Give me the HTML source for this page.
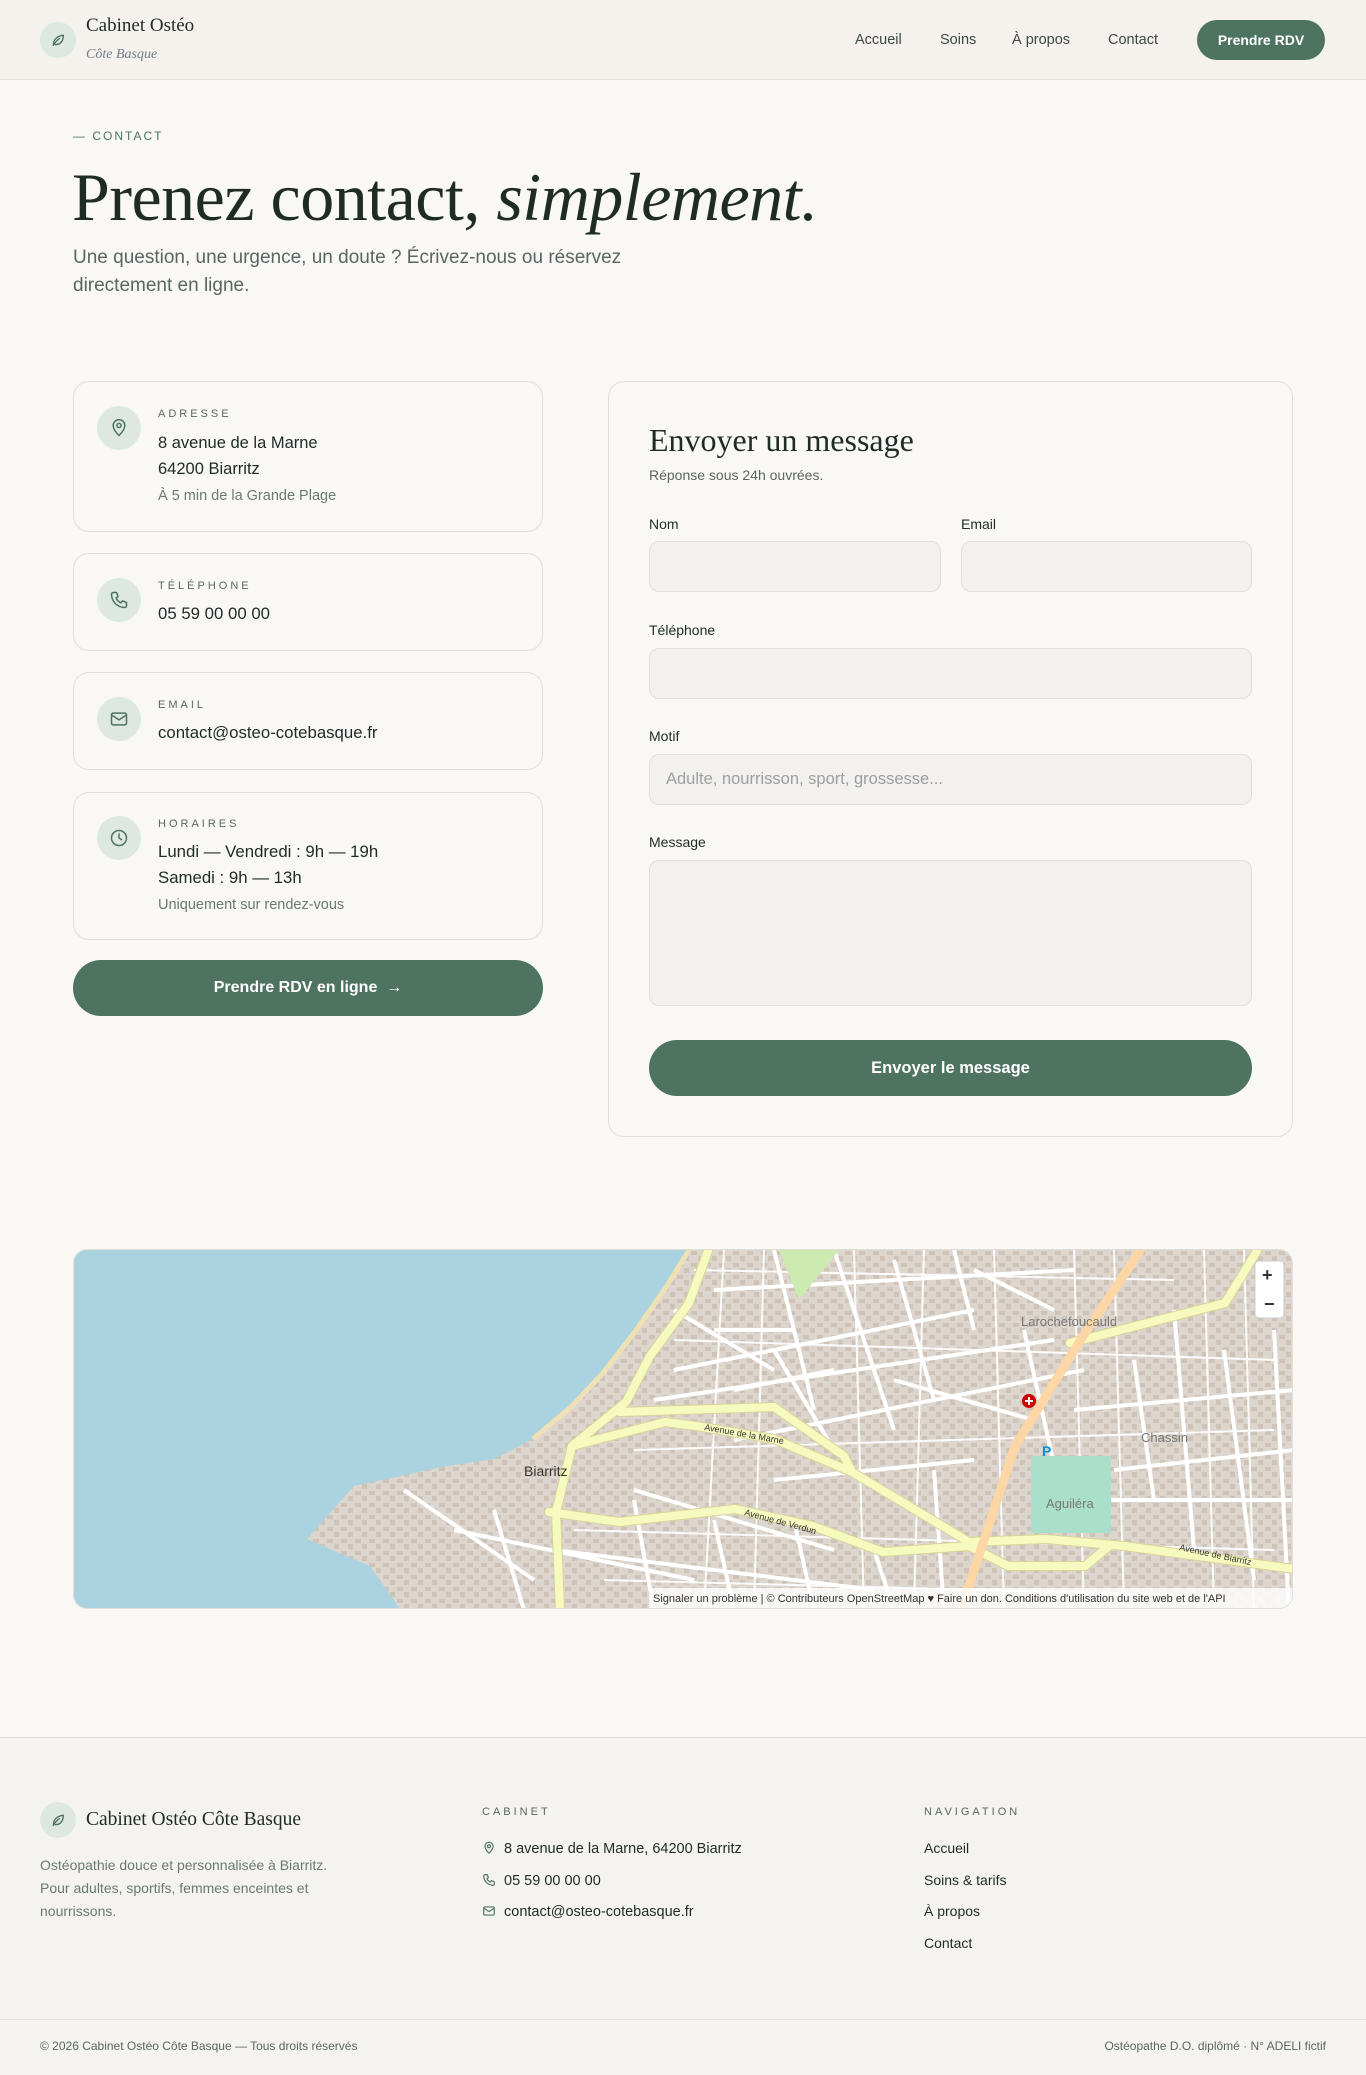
<!DOCTYPE html>
<html lang="fr"><head><meta charset="utf-8"><title>Contact</title>
<style>
*{box-sizing:border-box;margin:0;padding:0}
body{width:1366px;height:2075px;background:#f9f8f5;font-family:"Liberation Sans",sans-serif;color:#1f2b25;position:relative;overflow:hidden}
.a{position:absolute;white-space:nowrap}
.serif{font-family:"Liberation Serif",serif}
.lc{line-height:1}
.circle{position:absolute;border-radius:50%;background:#dce8e0;display:flex;align-items:center;justify-content:center}
.card{position:absolute;left:73px;width:470px;border:1px solid #e3dfd8;border-radius:16px;background:#f9f8f5}
.lab{font-size:11px;letter-spacing:3px;color:#5a6660}
.inp{position:absolute;background:#f3f1ed;border:1px solid #e3dfd8;border-radius:10px}
.flab{font-size:14px;font-weight:500;color:#1f2b25}
.btn{position:absolute;background:#4e7360;color:#fff;font-weight:bold;display:flex;align-items:center;justify-content:center}
</style></head><body>
<!-- header -->
<div class="a" style="left:0;top:0;width:1366px;height:80px;background:#f5f1ec;border-bottom:1px solid #e5e0d8"></div>
<div class="circle" style="left:40px;top:22px;width:36px;height:36px"><svg width="16" height="16" viewBox="0 0 24 24" fill="none" stroke="#4e7360" stroke-width="2" stroke-linecap="round"><path d="M5 20c0-8 5-14 15-15 0 9-5 14-12 14"/><path d="M5 20c3-5 6-8 9-10"/></svg></div>
<div class="a serif lc" style="left:86px;top:16px;font-size:19px;color:#1f2b25">Cabinet Ostéo</div>
<div class="a serif lc" style="left:86px;top:48px;font-size:14px;font-style:italic;color:#6f7d88">Côte Basque</div>
<div class="a lc" style="left:855px;top:33px;font-size:14.5px;color:#3d4a43">Accueil</div>
<div class="a lc" style="left:940px;top:33px;font-size:14.5px;color:#3d4a43">Soins</div>
<div class="a lc" style="left:1012px;top:33px;font-size:14.5px;color:#3d4a43">À propos</div>
<div class="a lc" style="left:1108px;top:33px;font-size:14.5px;color:#3d4a43">Contact</div>
<div class="btn" style="left:1197px;top:20px;width:128px;height:40px;border-radius:20px;font-size:14px">Prendre RDV</div>

<!-- hero -->
<div class="a lc" style="left:73px;top:130px;font-size:12px;letter-spacing:2px;color:#4e7360">— CONTACT</div>
<div class="a serif lc" style="left:72px;top:163px;font-size:68px;letter-spacing:-0.5px;color:#1f2b25">Prenez contact, <i>simplement.</i></div>
<div class="a" style="left:73px;top:244px;font-size:19px;line-height:28px;color:#5a6660;white-space:normal;width:640px">Une question, une urgence, un doute ? Écrivez-nous ou réservez<br>directement en ligne.</div>

<!-- cards -->
<div class="card" style="top:381px;height:151px"></div>
<div class="circle" style="left:97px;top:406px;width:44px;height:44px"><svg width="20" height="20" viewBox="0 0 24 24" fill="none" stroke="#4e7360" stroke-width="1.8"><path d="M12 21s-7-6.5-7-12a7 7 0 0 1 14 0c0 5.5-7 12-7 12z"/><circle cx="12" cy="9" r="2.5"/></svg></div>
<div class="a lab lc" style="left:158px;top:409px">ADRESSE</div>
<div class="a" style="left:158px;top:430px;font-size:16.5px;line-height:26px">8 avenue de la Marne<br>64200 Biarritz</div>
<div class="a lc" style="left:158px;top:489px;font-size:14.5px;color:#6b7a70">À 5 min de la Grande Plage</div>

<div class="card" style="top:553px;height:98px"></div>
<div class="circle" style="left:97px;top:578px;width:44px;height:44px"><svg width="20" height="20" viewBox="0 0 24 24" fill="none" stroke="#4e7360" stroke-width="1.8" stroke-linejoin="round"><path d="M5 3h4l2 5-2.5 1.5a11 11 0 0 0 6 6L16 13l5 2v4a2 2 0 0 1-2 2A16 16 0 0 1 3 5a2 2 0 0 1 2-2z"/></svg></div>
<div class="a lab lc" style="left:158px;top:581px">TÉLÉPHONE</div>
<div class="a lc" style="left:158px;top:606px;font-size:16.8px">05 59 00 00 00</div>

<div class="card" style="top:672px;height:98px"></div>
<div class="circle" style="left:97px;top:697px;width:44px;height:44px"><svg width="20" height="20" viewBox="0 0 24 24" fill="none" stroke="#4e7360" stroke-width="1.8"><rect x="3" y="5" width="18" height="14" rx="2"/><path d="M3 7l9 6 9-6"/></svg></div>
<div class="a lab lc" style="left:158px;top:700px">EMAIL</div>
<div class="a lc" style="left:158px;top:725px;font-size:16.8px">contact@osteo-cotebasque.fr</div>

<div class="card" style="top:792px;height:148px"></div>
<div class="circle" style="left:97px;top:816px;width:44px;height:44px"><svg width="20" height="20" viewBox="0 0 24 24" fill="none" stroke="#4e7360" stroke-width="1.8" stroke-linecap="round"><circle cx="12" cy="12" r="9"/><path d="M12 7v5l3 2"/></svg></div>
<div class="a lab lc" style="left:158px;top:819px">HORAIRES</div>
<div class="a" style="left:158px;top:839px;font-size:16.8px;line-height:26px">Lundi — Vendredi : 9h — 19h<br>Samedi : 9h — 13h</div>
<div class="a lc" style="left:158px;top:898px;font-size:14.5px;color:#6b7a70">Uniquement sur rendez-vous</div>

<div class="btn" style="left:73px;top:960px;width:470px;height:56px;border-radius:28px;font-size:16px">Prendre RDV en ligne&nbsp;&nbsp;<span style="font-weight:normal">→</span></div>

<!-- form -->
<div class="a" style="left:608px;top:381px;width:685px;height:756px;border:1px solid #e3dfd8;border-radius:16px"></div>
<div class="a serif lc" style="left:649px;top:424px;font-size:32px">Envoyer un message</div>
<div class="a lc" style="left:649px;top:468px;font-size:14px;color:#5a6660">Réponse sous 24h ouvrées.</div>
<div class="a flab lc" style="left:649px;top:517px">Nom</div>
<div class="a flab lc" style="left:961px;top:517px">Email</div>
<div class="inp" style="left:649px;top:541px;width:292px;height:51px"></div>
<div class="inp" style="left:961px;top:541px;width:291px;height:51px"></div>
<div class="a flab lc" style="left:649px;top:623px">Téléphone</div>
<div class="inp" style="left:649px;top:648px;width:603px;height:51px"></div>
<div class="a flab lc" style="left:649px;top:729px">Motif</div>
<div class="inp" style="left:649px;top:754px;width:603px;height:51px"></div>
<div class="a lc" style="left:666px;top:771px;font-size:16.5px;color:#9a9ea3">Adulte, nourrisson, sport, grossesse...</div>
<div class="a flab lc" style="left:649px;top:835px">Message</div>
<div class="inp" style="left:649px;top:860px;width:603px;height:146px"></div>
<div class="btn" style="left:649px;top:1040px;width:603px;height:56px;border-radius:28px;font-size:16.5px">Envoyer le message</div>

<!-- map -->
<div class="a" style="left:73px;top:1249px;width:1220px;height:360px;border-radius:14px;overflow:hidden;border:1px solid #e3dfd8">
<svg width="1220" height="360" viewBox="0 0 1220 360">
<defs><pattern id="b" width="14" height="12" patternUnits="userSpaceOnUse"><rect width="14" height="12" fill="#ddd6cf"/><rect x="1" y="1" width="6" height="4" fill="#cfc2b6"/><rect x="8" y="6" width="5" height="5" fill="#cfc2b6"/></pattern></defs>
<rect width="1220" height="360" fill="url(#b)"/>
<g stroke="#fff" stroke-width="4" fill="none">
<path d="M640 40L1000 20M600 120L900 60M580 150L980 90M660 190L1010 120M700 230L900 210M560 240L760 300M480 300L800 340M380 280L620 330M600 60L700 120M700 0L740 160M760 0L820 180M820 10L860 150M880 0L900 80M950 80L990 260M1060 110L1080 250M1100 60L1120 300M1150 100L1180 330M1200 80L1215 360M560 250L580 360M640 270L660 360M720 270L740 360M800 300L820 360M860 220L870 360M420 260L450 360M330 240L460 330M700 100L760 200M1000 160L1220 140M1040 220L1220 200M1000 250L1220 250M820 130L960 170M900 20L980 60M640 80L720 80M660 140L760 120"/>
</g>
<g stroke="#fff" stroke-width="2" fill="none" opacity=".9">
<path d="M620 20L1100 30M600 90L1200 110M560 200L1200 180M500 280L1200 300M530 330L1100 345M650 0L630 360M690 0L680 360M780 0L790 360M850 0L840 360M920 0L930 360M1000 0L1010 360M1040 0L1050 360M1130 0L1140 360M1170 0L1180 360"/>
</g>
<path d="M0 0H615L591 39 560 83 529 123 498 156 459 189 420 209 373 216 327 226 280 236 257 262 233 289 296 316 327 360H0Z" fill="#aad3df"/>
<path d="M615 0L591 39 560 83 529 123 498 156 459 189" stroke="#efe0b6" stroke-width="5" fill="none"/>
<path d="M705 0h60l-40 50z" fill="#cdebb0"/>
<path d="M957 206h80v77h-80z" fill="#aae0cb"/>
<g fill="none" stroke-linecap="round" stroke-linejoin="round">
<g stroke="#d8d49a" stroke-width="10"><path d="M634 1L615 53 576 106 552 152 498 196 482 262 486 360M545 162L700 157 770 206 778 222M498 196L591 172 622 176 700 189 778 222 895 292 972 289 1050 296 1220 319M475 262L545 272 661 259 739 276 809 302 895 296M895 296L934 316 1011 316 1035 296M996 93L1151 53 1183 1"/></g>
<g stroke="#f7fabf" stroke-width="8"><path d="M634 1L615 53 576 106 552 152 498 196 482 262 486 360M545 162L700 157 770 206 778 222M498 196L591 172 622 176 700 189 778 222 895 292 972 289 1050 296 1220 319M475 262L545 272 661 259 739 276 809 302 895 296M895 296L934 316 1011 316 1035 296M996 93L1151 53 1183 1"/></g>
<path d="M1066 1L1011 83 941 196 887 360" stroke="#fcd6a4" stroke-width="9"/>
</g>
<text x="450" y="226" font-family="Liberation Sans" font-size="14" fill="#333">Biarritz</text>
<text x="947" y="76" font-family="Liberation Sans" font-size="13" fill="#777">Larochefoucauld</text>
<text x="1067" y="192" font-family="Liberation Sans" font-size="13" fill="#777">Chassin</text>
<text x="972" y="258" font-family="Liberation Sans" font-size="13" fill="#777">Aguiléra</text>
<text x="630" y="180" font-family="Liberation Sans" font-size="9" fill="#333" transform="rotate(10 630 180)">Avenue de la Marne</text>
<text x="670" y="265" font-family="Liberation Sans" font-size="9" fill="#333" transform="rotate(15 670 265)">Avenue de Verdun</text>
<text x="1105" y="300" font-family="Liberation Sans" font-size="9" fill="#333" transform="rotate(12 1105 300)">Avenue de Biarritz</text>
<circle cx="955" cy="151" r="7" fill="#c00"/><path d="M955 147v8M951 151h8" stroke="#fff" stroke-width="2"/>
<text x="968" y="206" font-family="Liberation Sans" font-size="14" font-weight="bold" fill="#0092da">P</text>
<rect x="1181" y="11" width="29" height="57" rx="4" fill="#fff" stroke="#ccc"/>
<text x="1188" y="31" font-family="Liberation Sans" font-size="18" font-weight="bold" fill="#333">+</text>
<text x="1190" y="60" font-family="Liberation Sans" font-size="18" font-weight="bold" fill="#333">−</text>
<rect x="575" y="338" width="645" height="22" fill="#fff" opacity=".8"/>
<text x="579" y="352" font-family="Liberation Sans" font-size="11" fill="#333">Signaler un problème | © Contributeurs OpenStreetMap ♥ Faire un don. Conditions d'utilisation du site web et de l'API</text>
</svg></div>

<!-- footer -->
<div class="a" style="left:0;top:1737px;width:1366px;height:338px;background:#f5f3ef;border-top:1px solid #e3dfd8"></div>
<div class="circle" style="left:40px;top:1802px;width:36px;height:36px"><svg width="16" height="16" viewBox="0 0 24 24" fill="none" stroke="#4e7360" stroke-width="2" stroke-linecap="round"><path d="M5 20c0-8 5-14 15-15 0 9-5 14-12 14"/><path d="M5 20c3-5 6-8 9-10"/></svg></div>
<div class="a serif lc" style="left:86px;top:1810px;font-size:19.5px">Cabinet Ostéo Côte Basque</div>
<div class="a" style="left:40px;top:1854px;font-size:14px;line-height:23px;color:#6b7a70">Ostéopathie douce et personnalisée à Biarritz.<br>Pour adultes, sportifs, femmes enceintes et<br>nourrissons.</div>
<div class="a lc" style="left:482px;top:1807px;font-size:11px;letter-spacing:3px;color:#5a6660">CABINET</div>
<div class="a lc" style="left:482px;top:1841px;font-size:14.5px"><svg width="14" height="14" viewBox="0 0 24 24" fill="none" stroke="#4e7360" stroke-width="2" style="vertical-align:-2px;margin-right:8px"><path d="M12 21s-7-6.5-7-12a7 7 0 0 1 14 0c0 5.5-7 12-7 12z"/><circle cx="12" cy="9" r="2.5"/></svg>8 avenue de la Marne, 64200 Biarritz</div>
<div class="a lc" style="left:482px;top:1873px;font-size:14.5px"><svg width="14" height="14" viewBox="0 0 24 24" fill="none" stroke="#4e7360" stroke-width="2" style="vertical-align:-2px;margin-right:8px"><path d="M5 3h4l2 5-2.5 1.5a11 11 0 0 0 6 6L16 13l5 2v4a2 2 0 0 1-2 2A16 16 0 0 1 3 5a2 2 0 0 1 2-2z"/></svg>05 59 00 00 00</div>
<div class="a lc" style="left:482px;top:1904px;font-size:14.5px"><svg width="14" height="14" viewBox="0 0 24 24" fill="none" stroke="#4e7360" stroke-width="2" style="vertical-align:-2px;margin-right:8px"><rect x="3" y="5" width="18" height="14" rx="2"/><path d="M3 7l9 6 9-6"/></svg>contact@osteo-cotebasque.fr</div>
<div class="a lc" style="left:924px;top:1807px;font-size:11px;letter-spacing:3px;color:#5a6660">NAVIGATION</div>
<div class="a lc" style="left:924px;top:1841px;font-size:14px">Accueil</div>
<div class="a lc" style="left:924px;top:1873px;font-size:14px">Soins &amp; tarifs</div>
<div class="a lc" style="left:924px;top:1904px;font-size:14px">À propos</div>
<div class="a lc" style="left:924px;top:1936px;font-size:14px">Contact</div>
<div class="a" style="left:0;top:2019px;width:1366px;height:1px;background:#e3dfd8"></div>
<div class="a lc" style="left:40px;top:2040px;font-size:12px;color:#5a6660">© 2026 Cabinet Ostéo Côte Basque — Tous droits réservés</div>
<div class="a lc" style="right:40px;top:2040px;font-size:12px;color:#5a6660">Ostéopathe D.O. diplômé · N° ADELI fictif</div>
</body></html>
